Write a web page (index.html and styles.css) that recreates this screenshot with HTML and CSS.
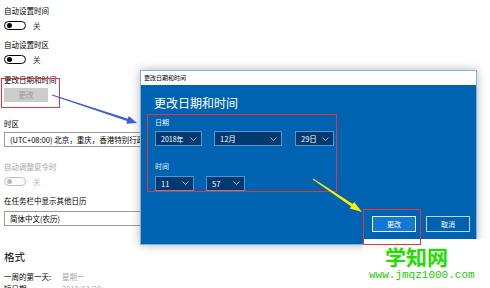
FILE: index.html
```html
<!DOCTYPE html>
<html lang="zh-CN">
  <head>
    <meta charset="UTF-8" />
    <meta name="viewport" content="width=device-width, initial-scale=1.0" />
    <title>更改日期和时间</title>
    <link rel="stylesheet" href="styles.css">
  </head>
  <body>
    <div class="settings">
      <div class="label">自动设置时间</div>
      <div class="switch-row"><span class="switch"></span><span class="switch-text">关</span></div>

      <div class="label gap">自动设置时区</div>
      <div class="switch-row"><span class="switch"></span><span class="switch-text">关</span></div>

      <div class="label gap-md">更改日期和时间</div>
      <div class="btn-disabled">更改</div>

      <div class="label gap-lg">时区</div>
      <div class="select">(UTC+08:00) 北京，重庆，香港特别行政区，乌鲁木齐</div>

      <div class="label gap-sect disabled">自动调整夏令时</div>
      <div class="switch-row disabled"><span class="switch"></span><span class="switch-text">关</span></div>

      <div class="label gap">在任务栏中显示其他日历</div>
      <div class="select select-near">简体中文(农历)</div>

      <h2 class="heading">格式</h2>
      <div class="format-row first"><span class="key">一周的第一天:</span><span class="val">星期一</span></div>
      <div class="format-row"><span class="key">短日期:</span><span class="val">2018/12/29</span></div>
    </div>

    <div class="dialog">
      <div class="dialog-title">更改日期和时间</div>
      <div class="dialog-body">
        <h1>更改日期和时间</h1>
        <div class="pick-group">
          <div class="pick-label">日期</div>
          <div class="pick-row">
            <div class="pick year">2018年<svg viewBox="0 0 7 4"><path d="M0.5 0.5L3.5 3.5L6.5 0.5" /></svg></div>
            <div class="pick month">12月<svg viewBox="0 0 7 4"><path d="M0.5 0.5L3.5 3.5L6.5 0.5" /></svg></div>
            <div class="pick day">29日<svg viewBox="0 0 7 4"><path d="M0.5 0.5L3.5 3.5L6.5 0.5" /></svg></div>
          </div>
          <div class="pick-label time-label">时间</div>
          <div class="pick-row">
            <div class="pick hour">11<svg viewBox="0 0 7 4"><path d="M0.5 0.5L3.5 3.5L6.5 0.5" /></svg></div>
            <div class="pick minute">57<svg viewBox="0 0 7 4"><path d="M0.5 0.5L3.5 3.5L6.5 0.5" /></svg></div>
          </div>
        </div>
        <div class="actions">
          <button class="btn primary">更改</button>
          <button class="btn">取消</button>
        </div>
      </div>
    </div>

    <svg class="arrows" viewBox="0 0 490 288">
      <polygon class="arrow-blue" points="52.1,94.6 127.9,118.8 128.75,116.1 137,123 126.25,123.7 127.1,121.0 51.9,95.4" />
      <polygon class="arrow-yellow" points="313.3,178.6 352.8,204.1 354.2,202 362,212 349.8,208.6 351.2,206.5 312.7,179.4" />
    </svg>

    <div class="watermark">
      <div class="wm-title">学知网</div>
      <div class="wm-url">www.jmqz1000.com</div>
    </div>

    <div class="callout callout-left"></div>
    <div class="callout callout-button"></div>
  </body>
</html>
```

FILE: styles.css
```css
body {
  margin: 0;
  width: 490px;
  height: 288px;
  overflow: hidden;
  position: relative;
  background-color: #fff;
  color: #000;
  font-family: "Noto Sans CJK SC", "Liberation Sans", sans-serif;
}

/* settings page behind the dialog */
.settings {
  padding: 5px 0 0 4px;
  font-size: 7.5px;
}

.label {
  line-height: 12px;
}

.gap {
  margin-top: 9px;
}

.gap-md {
  margin-top: 10px;
}

.gap-lg {
  margin-top: 16px;
}

.gap-sect {
  margin-top: 14px;
}

.disabled {
  color: #a6a6a6;
}

.switch-row {
  display: flex;
  align-items: center;
  height: 9px;
  margin-top: 4px;
}

.switch {
  width: 22px;
  height: 9px;
  box-sizing: border-box;
  border: 1.2px solid #000;
  border-radius: 5px;
  display: flex;
  align-items: center;
  padding-left: 1.5px;
}

.switch::before {
  content: "";
  width: 5px;
  height: 5px;
  border-radius: 50%;
  background-color: #000;
}

.switch-row.disabled .switch {
  border-color: #bdbdbd;
}

.switch-row.disabled .switch::before {
  background-color: #bdbdbd;
}

.switch-text {
  margin-left: 7px;
  color: #333;
}

.switch-row.disabled .switch-text {
  color: #b5b5b5;
}

.btn-disabled {
  width: 44px;
  height: 14px;
  margin-top: 2px;
  background-color: #ccc;
  color: #9b9b9b;
  text-align: center;
  line-height: 14px;
}

.select {
  width: 200px;
  height: 15px;
  margin-top: 2px;
  box-sizing: border-box;
  border: 1px solid #999;
  padding-left: 5px;
  line-height: 13px;
  white-space: nowrap;
  overflow: hidden;
}

.select-near {
  margin-top: 4px;
}

.heading {
  margin: 24px 0 0;
  font-size: 10.5px;
  font-weight: 400;
  line-height: 14px;
}

.format-row {
  display: flex;
  line-height: 12px;
}

.format-row.first {
  margin-top: 7px;
}

.format-row .key {
  width: 58px;
}

.format-row .val {
  color: #a6a6a6;
}

/* dialog window */
.dialog {
  position: absolute;
  left: 140px;
  top: 70px;
  width: 337px;
  height: 175px;
  box-sizing: border-box;
  border: 1px solid #7fb2e5;
  box-shadow: 0 0 9px rgba(0, 0, 0, 0.3);
  display: flex;
  flex-direction: column;
}

.dialog-title {
  height: 14px;
  background-color: #fff;
  font-size: 6px;
  line-height: 14px;
  padding-left: 3px;
}

.dialog-body {
  flex: 1;
  background-color: #0063b1;
  color: #fff;
  padding: 10px 6px 12px;
  display: flex;
  flex-direction: column;
}

.dialog-body h1 {
  margin: 0 0 0 7px;
  font-size: 12px;
  font-weight: 400;
  line-height: 16px;
}

.pick-group {
  width: 190px;
  margin-top: 3px;
  box-sizing: border-box;
  border: 1.5px solid #e8323c;
  padding: 1.5px 0 0.5px 7px;
}

.pick-label {
  font-size: 7px;
  line-height: 10px;
  color: #e6f0fa;
}

.time-label {
  margin-top: 15px;
}

.pick-row {
  display: flex;
  margin-top: 4.5px;
}

.pick {
  height: 15px;
  box-sizing: border-box;
  border: 1px solid #4f96d8;
  background-color: #003a70;
  display: flex;
  align-items: center;
  justify-content: space-between;
  padding: 0 4px 0 5px;
  font-size: 7.5px;
}

.pick svg {
  width: 7px;
  height: 4px;
  flex-shrink: 0;
  fill: none;
  stroke: #c9dcef;
  stroke-width: 0.8;
}

.year {
  width: 47px;
  font-size: 7px;
}

.month {
  width: 68px;
  margin-left: 12px;
}

.day {
  width: 39px;
  margin-left: 13px;
}

.hour {
  width: 39px;
}

.minute {
  width: 39px;
  margin-left: 12px;
}

.actions {
  margin-top: auto;
  display: flex;
  justify-content: flex-end;
  gap: 10px;
}

.btn {
  width: 44px;
  height: 16px;
  padding: 0;
  box-sizing: border-box;
  border: 1.5px solid #bcd6ef;
  background-color: #0063b1;
  color: #fff;
  font-family: inherit;
  font-size: 7px;
}

.btn.primary {
  background-color: #1479d4;
  border-color: #e9f2fb;
}

/* annotations drawn over the screenshot */
.arrows {
  position: absolute;
  left: 0;
  top: 0;
  width: 490px;
  height: 288px;
  pointer-events: none;
}

.arrow-blue {
  fill: #3b5bdb;
}

.arrow-yellow {
  fill: #f7f000;
}

.watermark {
  position: absolute;
  left: 363px;
  top: 239px;
  width: 123px;
  height: 49px;
  background-color: #fff;
  padding-top: 6px;
  box-sizing: border-box;
}

.wm-title {
  padding-left: 22px;
  font-size: 21px;
  font-weight: 700;
  line-height: 22px;
  color: #22dd00;
}

.wm-url {
  margin-top: 3px;
  padding-left: 6px;
  font-family: "Liberation Mono", monospace;
  font-size: 11px;
  line-height: 11px;
  color: #22cc00;
}

.callout {
  position: absolute;
  border: 1.5px solid #e8323c;
  box-sizing: border-box;
}

.callout-left {
  left: 1px;
  top: 78px;
  width: 59px;
  height: 30px;
}

.callout-button {
  left: 363px;
  top: 209px;
  width: 58px;
  height: 36px;
}
```
